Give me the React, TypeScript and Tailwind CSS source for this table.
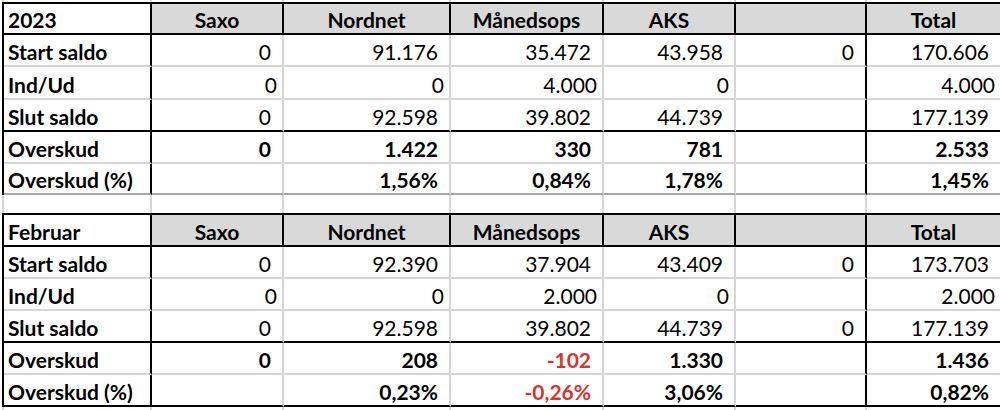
import React from "react";

const W = [
  "w-[148px]",
  "w-[132px]",
  "w-[167px]",
  "w-[153px]",
  "w-[132px]",
  "w-[131px]",
  "w-[135px]",
];

const VR_DATA = [
  "border-r-black",
  "border-r-[#d6d6d6]",
  "border-r-[#d6d6d6]",
  "border-r-[#d6d6d6]",
  "border-r-[#d6d6d6]",
  "border-r-black",
  "border-r-black",
];

type Val = { t: string; red?: boolean };
type RowDef = {
  label: string;
  vals: (string | Val)[];
  bold?: boolean;
  h: string;
  bb: string;
  pr: string;
};

function HeaderRow({ title, h }: { title: string; h: string }) {
  const heads = ["Saxo", "Nordnet", "Månedsops", "AKS", "", "Total"];
  return (
    <div className={`flex ${h}`}>
      <div
        className={`${W[0]} shrink-0 border-r-2 border-b-2 border-black flex items-end pb-[1px] pl-[4px] font-bold`}
      >
        {title}
      </div>
      {heads.map((hd, i) => (
        <div
          key={i}
          className={`${W[i + 1]} shrink-0 border-r-2 border-b-2 border-black bg-[#d9d9d9] flex items-end justify-center pb-[1px] font-bold`}
        >
          {hd}
        </div>
      ))}
    </div>
  );
}

function DataRow({ r }: { r: RowDef }) {
  return (
    <div className={`flex ${r.h}`}>
      <div
        className={`${W[0]} shrink-0 border-r-2 border-b-2 ${VR_DATA[0]} ${r.bb} flex items-end pb-[1px] pl-[4px] font-bold whitespace-nowrap`}
      >
        {r.label}
      </div>
      {r.vals.map((v, i) => {
        const val: Val = typeof v === "string" ? { t: v } : v;
        return (
          <div
            key={i}
            className={`${W[i + 1]} shrink-0 border-r-2 border-b-2 ${VR_DATA[i + 1]} ${r.bb} flex items-end justify-end pb-[1px] ${r.pr} ${r.bold ? "font-bold" : ""} ${val.red ? "text-[#e0302a]" : "text-black"}`}
          >
            {val.t}
          </div>
        );
      })}
    </div>
  );
}

function GridRow({ h }: { h: string }) {
  return (
    <div className={`flex ml-[2px] border-l-2 border-l-[#d6d6d6] ${h}`}>
      {W.map((w, i) => (
        <div key={i} className={`${w} shrink-0 border-r-2 border-r-[#d6d6d6]`} />
      ))}
    </div>
  );
}

const G = "border-b-[#d6d6d6]";
const B = "border-b-black";

const table1: RowDef[] = [
  { label: "Start saldo", vals: ["0", "91.176", "35.472", "43.958", "0", "170.606"], h: "h-[32px]", bb: G, pr: "pr-[11px]" },
  { label: "Ind/Ud", vals: ["0", "0", "4.000", "0", "", "4.000"], h: "h-[33px]", bb: G, pr: "pr-[5px]" },
  { label: "Slut saldo", vals: ["0", "92.598", "39.802", "44.739", "", "177.139"], h: "h-[32px]", bb: B, pr: "pr-[11px]" },
  { label: "Overskud", vals: ["0", "1.422", "330", "781", "", "2.533"], bold: true, h: "h-[32px]", bb: G, pr: "pr-[11px]" },
  { label: "Overskud (%)", vals: ["", "1,56%", "0,84%", "1,78%", "", "1,45%"], bold: true, h: "h-[31px]", bb: "border-b-[#a6a6a6]", pr: "pr-[11px]" },
];

const table2: RowDef[] = [
  { label: "Start saldo", vals: ["0", "92.390", "37.904", "43.409", "0", "173.703"], h: "h-[32px]", bb: G, pr: "pr-[11px]" },
  { label: "Ind/Ud", vals: ["0", "0", "2.000", "0", "", "2.000"], h: "h-[32px]", bb: G, pr: "pr-[5px]" },
  { label: "Slut saldo", vals: ["0", "92.598", "39.802", "44.739", "0", "177.139"], h: "h-[32px]", bb: B, pr: "pr-[11px]" },
  { label: "Overskud", vals: ["0", "208", { t: "-102", red: true }, "1.330", "", "1.436"], bold: true, h: "h-[32px]", bb: G, pr: "pr-[11px]" },
  { label: "Overskud (%)", vals: ["", "0,23%", { t: "-0,26%", red: true }, "3,06%", "", "0,82%"], bold: true, h: "h-[32px]", bb: B, pr: "pr-[11px]" },
];

export default function App() {
  return (
    <div
      className="w-[1000px] h-[410px] overflow-hidden bg-white text-black text-[21px] leading-[24px]"
      style={{ fontFamily: "Lato, 'Open Sans', sans-serif" }}
    >
      <GridRow h="h-[2px]" />
      <div className="ml-[2px] border-l-2 border-t-2 border-black w-max">
        <HeaderRow title="2023" h="h-[31px]" />
        {table1.map((r, i) => (
          <DataRow key={i} r={r} />
        ))}
      </div>
      <GridRow h="h-[18px]" />
      <div className="ml-[2px] border-l-2 border-t-2 border-black w-max">
        <HeaderRow title="Februar" h="h-[32px]" />
        {table2.map((r, i) => (
          <DataRow key={i} r={r} />
        ))}
      </div>
      <GridRow h="h-[10px]" />
    </div>
  );
}
